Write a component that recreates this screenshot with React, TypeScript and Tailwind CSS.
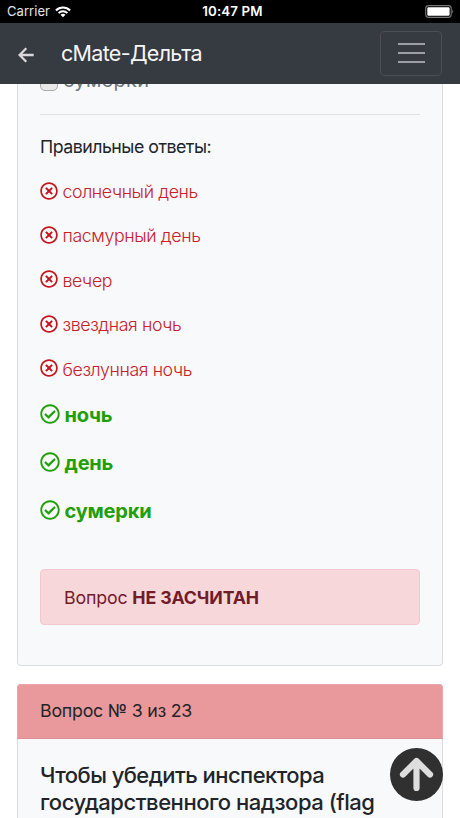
import { FaRegCheckCircle, FaRegTimesCircle } from "react-icons/fa";

const wrong = ["солнечный день", "пасмурный день", "вечер", "звездная ночь", "безлунная ночь"];
const right = ["ночь", "день", "сумерки"];

function StatusBar() {
  return (
    <div className="grid h-[23px] shrink-0 grid-cols-3 items-center bg-black pl-[7px] pr-[6px] text-[13.3px] text-white">
      <div className="flex items-center gap-[5px]">
        <span className="mt-px text-[13px] tracking-[0.005em] text-[#e4e4e4]">Carrier</span>
        <svg width="16" height="12" viewBox="0 0 17 12" fill="none" stroke="white" strokeWidth="2.2">
          <path d="M1 4.300C5.200.1 11.800 .1 16 4.300" />
          <path d="M3.800 7.200C6.400 4.600 10.600 4.600 13.200 7.200" />
          <path d="M5.900 8.900C7.400 7.500 9.600 7.500 11.100 8.900L8.500 11.600Z" fill="white" stroke="none" />
        </svg>
      </div>
      <span className="mt-px whitespace-nowrap pl-[4px] text-center font-semibold tracking-[0.01em]">10:47 PM</span>
      <svg className="justify-self-end" width="29" height="13" viewBox="0 0 29 13">
        <rect x=".7" y=".6" width="25.500" height="11.800" rx="2.800" fill="none" stroke="#777" strokeWidth="1.100" />
        <rect x="2.300" y="2.200" width="22.300" height="8.600" rx="1.200" fill="white" />
        <path d="M27.300 4.500Q29.200 6.500 27.300 8.500Z" fill="#777" />
      </svg>
    </div>
  );
}

function NavBar() {
  return (
    <header className="flex h-[61px] shrink-0 items-center bg-[#363a41] px-[18px]">
      <svg className="mt-[3px]" width="16" height="16" viewBox="0 0 16 16" fill="none" stroke="#d7d8d9" strokeWidth="2.300">
        <path d="M15.700 8H2M8.300 1.200L1.600 8L8.300 14.800" />
      </svg>
      <h1 className="ml-[27px] mt-px text-[21.500px] leading-none tracking-[-0.032em] text-[#f5f6f6]">сMate-Дельта</h1>
      <button className="-mt-px ml-auto flex h-[45px] w-[62px] flex-col items-center justify-center gap-[7px] rounded-[4px] border border-[#4b4e53]">
        <span className="h-[2px] w-[27px] bg-[#9c9fa4]" />
        <span className="h-[2px] w-[27px] bg-[#9c9fa4]" />
        <span className="h-[2px] w-[27px] bg-[#9c9fa4]" />
      </button>
    </header>
  );
}

export default function App() {
  return (
    <div className="relative flex h-[818px] w-[460px] flex-col overflow-hidden bg-white font-['Inter','Liberation_Sans',sans-serif] text-[17.75px] text-[#212529]">
      <StatusBar />
      <NavBar />
      <main className="flex min-h-0 flex-1 flex-col overflow-hidden px-[17px]">
        <section className="h-[582px] shrink-0 rounded-b-[4px] border border-t-0 border-[#d9dddd] bg-[#f8f9fb] px-[22px]">
          <div className="flex h-[30px] items-start overflow-hidden">
            <div className="-mt-[18px] flex h-[30px] items-center gap-[5px] text-[20px] leading-[30px] text-[#6c757d]">
              <span className="mt-px size-[18px] rounded-[5px] border border-[#aaa] bg-[#e9e9ea]" />
              <span className="-mt-[2px] tracking-[0.015em]">сумерки</span>
            </div>
          </div>
          <hr className="border-[#dfe1e3]" />
          <p className="mt-[18px] h-[27px] leading-[27px] tracking-[-0.028em]">Правильные ответы:</p>
          <ul className="mt-[18px]">
            {wrong.map((t) => (
              <li key={t} className="flex h-[44.400px] items-start gap-[4.500px] font-light text-[#c7202b]">
                <FaRegTimesCircle className="mt-[3.500px] size-[18px] text-[#c5141c]" />
                <span className="leading-[27px] tracking-[-0.022em]">{t}</span>
              </li>
            ))}
          </ul>
          <ul>
            {right.map((t) => (
              <li key={t} className="flex h-[47.800px] items-start gap-[4.500px] text-[20px] font-bold text-[#219f08]">
                <FaRegCheckCircle className="mt-[4px] size-[20px]" />
                <span className="leading-[30px] tracking-[-0.01em]">{t}</span>
              </li>
            ))}
          </ul>
          <div className="mt-[26px] flex h-[56px] items-center rounded-[4px] border border-[#f2c8ce] bg-[#f7d7da] px-[23px] text-[#721c29]">
            <p className="mt-px tracking-[-0.008em]">Вопрос <b>НЕ ЗАСЧИТАН</b></p>
          </div>
        </section>
        <section className="mt-[18px] h-[160px] shrink-0 rounded-t-[4px] border border-[#d9dddd] bg-[#f8f9fb]">
          <div className="-mx-px -mt-px flex h-[55px] items-center rounded-t-[4px] border border-[#dc8f94] border-x-[#e9a5a9] border-t-[#e9a5a9] bg-[#e9999c] px-[22px] tracking-[-0.013em]">
            Вопрос № 3 из 23
          </div>
          <h2 className="whitespace-nowrap px-[22px] pt-[23px] text-[22px] font-medium leading-[27px] tracking-[-0.025em]">
            Чтобы убедить инспектора<br /><span className="tracking-[-0.021em]">государственного надзора (flag</span>
          </h2>
        </section>
      </main>
      <button className="absolute left-[390px] top-[748px] flex size-[53px] items-center justify-center rounded-full bg-[#303030]">
        <svg width="53" height="53" viewBox="0 0 53 53" fill="none" stroke="#dedede" strokeWidth="6.200" strokeLinecap="round" strokeLinejoin="round">
          <path d="M26.500 40V13.500M13 26.500L26.500 13L40 26.500" />
        </svg>
      </button>
    </div>
  );
}
